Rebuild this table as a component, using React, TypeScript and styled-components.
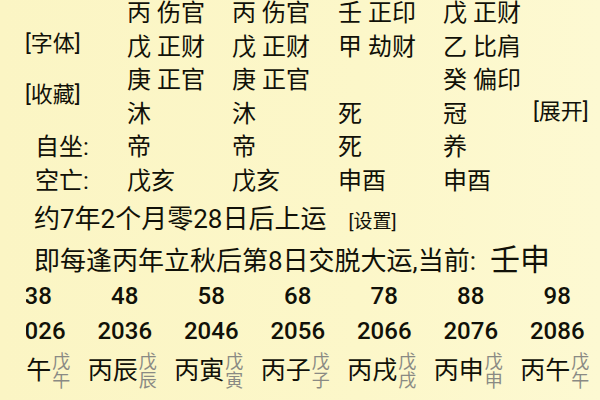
import React from "react";
import styled, { createGlobalStyle } from "styled-components";

const Global = createGlobalStyle`
  html, body { margin: 0; padding: 0; background: #fbf6c7; }
  body { font-family: Roboto, "Noto Sans CJK SC", sans-serif; color: #111108; }
`;

const Page = styled.div`
  width: 600px;
  height: 400px;
  overflow: hidden;
  background: linear-gradient(90deg, #fbf5c4 0%, #fcf7c9 60%, #fdf9d2 100%);
`;

const TopGrid = styled.div`
  display: grid;
  grid-template-columns: 102px 105px 106px 105px 90px 1fr;
  grid-template-rows: repeat(6, 33.6px);
  margin-top: -3px;
  padding-left: 25px;
  font-size: 24px;
`;

const Cell = styled.div<{ $row: number; $col: number }>`
  grid-row: ${(p) => p.$row};
  grid-column: ${(p) => p.$col};
  line-height: 33.6px;
  white-space: pre;
`;

const SideLinks = styled.div`
  grid-row: 1 / 5;
  grid-column: 1;
  display: flex;
  flex-direction: column;
  gap: 23px;
  padding-top: 33px;
`;

const Link = styled.div<{ $size?: number }>`
  font-size: ${(p) => p.$size ?? 22}px;
  line-height: 28px;
  white-space: nowrap;
`;

const RowLabel = styled(Cell)`
  padding-left: 10px;
`;

const InfoLine = styled.div<{ $top?: number }>`
  display: flex;
  align-items: baseline;
  padding-left: 34px;
  margin-top: ${(p) => p.$top ?? 0}px;
  font-size: 26px;
  line-height: 38px;
  white-space: nowrap;
`;

const Setting = styled.span`
  font-size: 19px;
  margin-left: 22px;
`;

const Current = styled.span`
  font-size: 30px;
  margin-left: 14px;
`;

const Strip = styled.div`
  margin-left: 26px;
  margin-top: -2px;
  overflow: hidden;
`;

const StripInner = styled.div`
  margin-left: -31px;
  display: flex;
  flex-direction: column;
`;

const StripRow = styled.div<{ $h: number }>`
  display: grid;
  grid-template-columns: repeat(7, 86.5px);
  height: ${(p) => p.$h}px;
  align-items: center;
  justify-items: center;
`;

const Num = styled.div`
  font-size: 24px;
  line-height: 34px;
  font-weight: 500;
`;

const Pillar = styled.div`
  display: flex;
  align-items: center;
  padding-right: 5px;
`;

const Big = styled.span`
  font-size: 25px;
  line-height: 30px;
`;

const Small = styled.span`
  display: flex;
  flex-direction: column;
  font-size: 18px;
  line-height: 19px;
  color: #8a8a84;
  margin-left: 1px;
`;

const Peek = styled.span`
  font-size: 18px;
  color: #9a9a92;
  padding-left: 60px;
`;

const cols = [
  ["丙 伤官", "戊 正财", "庚 正官", "沐", "帝", "戊亥"],
  ["丙 伤官", "戊 正财", "庚 正官", "沐", "帝", "戊亥"],
  ["壬 正印", "甲 劫财", "", "死", "死", "申酉"],
  ["戊 正财", "乙 比肩", "癸 偏印", "冠", "养", "申酉"],
];

const ages = ["38", "48", "58", "68", "78", "88", "98"];
const years = ["2026", "2036", "2046", "2056", "2066", "2076", "2086"];
const pillars = [
  ["丙午", "午"],
  ["丙辰", "辰"],
  ["丙寅", "寅"],
  ["丙子", "子"],
  ["丙戌", "戌"],
  ["丙申", "申"],
  ["丙午", "午"],
];

export default function App() {
  return (
    <Page>
      <Global />
      <TopGrid>
        <SideLinks>
          <Link>[字体]</Link>
          <Link>[收藏]</Link>
        </SideLinks>
        {cols.map((c, ci) =>
          c.map((v, ri) => (
            <Cell key={`${ci}-${ri}`} $row={ri + 1} $col={ci + 2}>
              {v}
            </Cell>
          ))
        )}
        <Cell $row={4} $col={6}>
          <Link>[展开]</Link>
        </Cell>
        <RowLabel $row={5} $col={1}>自坐:</RowLabel>
        <RowLabel $row={6} $col={1}>空亡:</RowLabel>
      </TopGrid>
      <InfoLine $top={1}>
        约7年2个月零28日后上运<Setting>[设置]</Setting>
      </InfoLine>
      <InfoLine>
        即每逢丙年立秋后第8日交脱大运,当前:<Current>壬申</Current>
      </InfoLine>
      <Strip>
        <StripInner>
          <StripRow $h={36}>
            {ages.map((a) => (
              <Num key={a}>{a}</Num>
            ))}
          </StripRow>
          <StripRow $h={34}>
            {years.map((y) => (
              <Num key={y}>{y}</Num>
            ))}
          </StripRow>
          <StripRow $h={46}>
            {pillars.map(([b, s], i) => (
              <Pillar key={i}>
                <Big>{b}</Big>
                <Small>
                  <span>戊</span>
                  <span>{s}</span>
                </Small>
              </Pillar>
            ))}
          </StripRow>
          <StripRow $h={20}>
            {pillars.map((_, i) => (
              <Peek key={i}>正</Peek>
            ))}
          </StripRow>
        </StripInner>
      </Strip>
    </Page>
  );
}
